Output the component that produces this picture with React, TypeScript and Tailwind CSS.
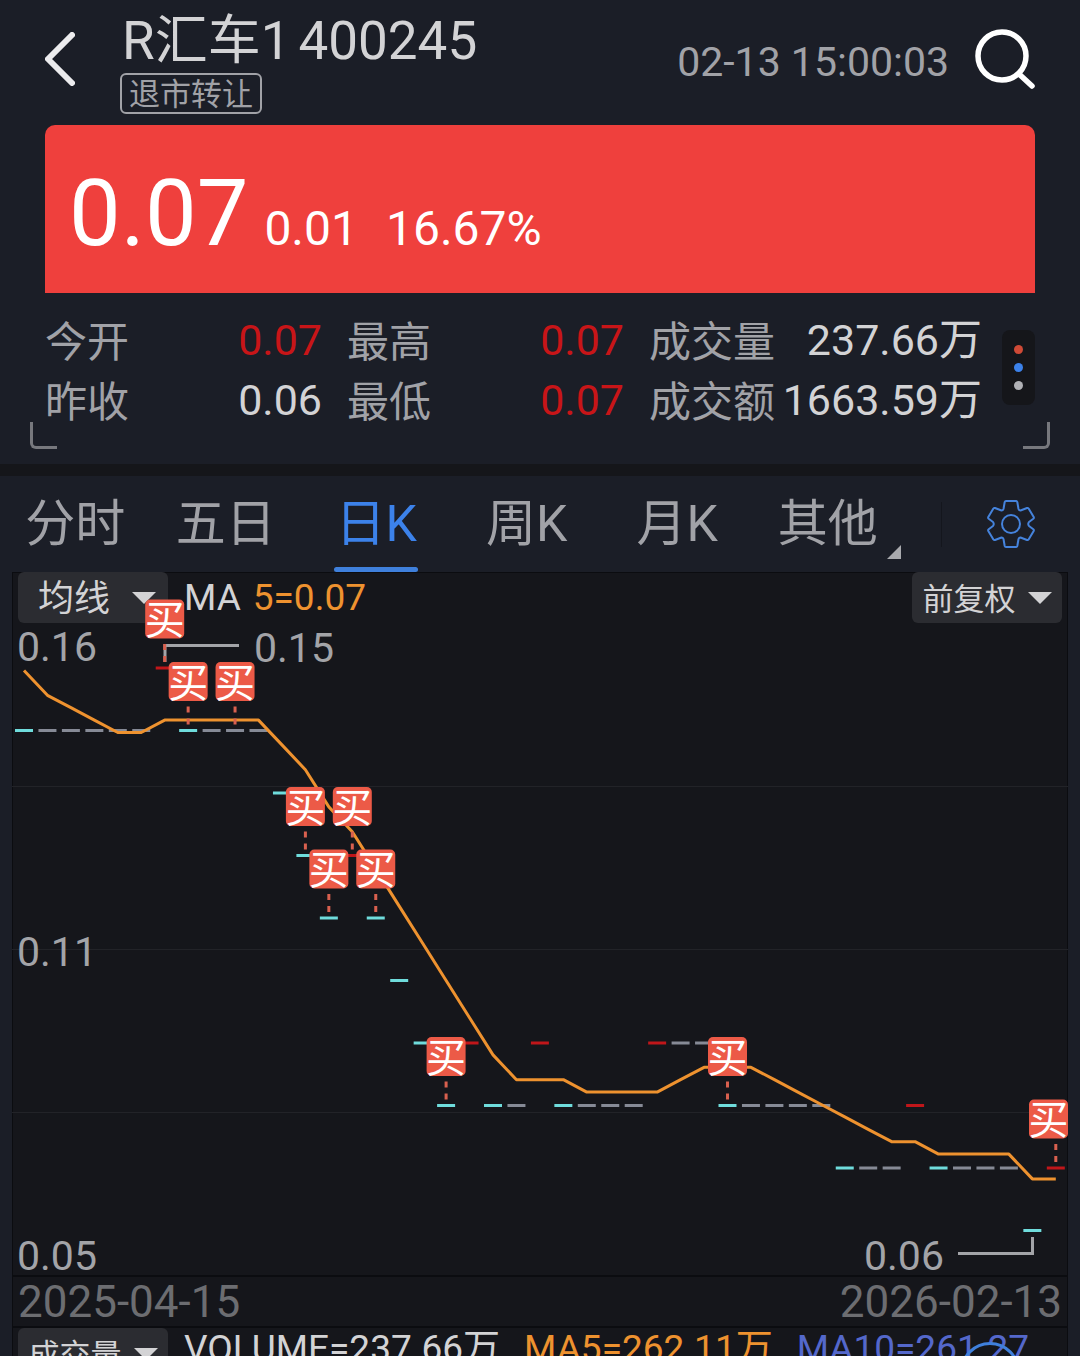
import { useState } from 'react'

const tabs = ['分时', '五日', '日K', '周K', '月K', '其他']

// The first four closes only feed the moving average.
const warmup = [0.16, 0.15, 0.15, 0.15]
const closes = [
  0.14, 0.14, 0.14, 0.14, 0.14, 0.14, 0.15, 0.14, 0.14, 0.14, 0.14, 0.13, 0.12, 0.11, 0.12,
  0.11, 0.1, 0.09, 0.08, 0.09, 0.08, 0.08, 0.09, 0.08, 0.08, 0.08, 0.08, 0.09, 0.09, 0.09,
  0.08, 0.08, 0.08, 0.08, 0.08, 0.07, 0.07, 0.07, 0.08, 0.07, 0.07, 0.07, 0.07, 0.06, 0.07,
]
const buys = [6, 7, 9, 12, 14, 13, 15, 18, 30, 44]

const CHART_W = 1056
const CHART_H = 703

const barX = (i: number) => 12 + i * 23.45
const priceY = (p: number) => 158.5 + (0.14 - p) * 6250
const averageY = (p: number) => 160.5 + (0.14 - p) * 6200

function barColor(i: number) {
  const prev = i === 0 ? warmup[3] : closes[i - 1]
  if (closes[i] > prev) return '#c0161a'
  if (closes[i] < prev) return '#6fdcdc'
  return '#868a96'
}

function averagePoints() {
  const all = [...warmup, ...closes]
  return closes
    .map((_, i) => {
      const sum = all.slice(i, i + 5).reduce((a, b) => a + b, 0)
      return `${barX(i)},${averageY(sum / 5)}`
    })
    .join(' ')
}

function BuyMark({ index }: { index: number }) {
  const x = barX(index)
  const y = priceY(closes[index])
  const left = Math.min(x - 19.5, CHART_W - 39)
  return (
    <g>
      <line x1={x} x2={x} y1={y - 24} y2={y - 6} stroke="#d9604f" strokeWidth="3" strokeDasharray="6 6" />
      <rect x={left} y={y - 68.5} width="39" height="39" rx="5" fill="#ec5a47" />
      <text x={left + 19.5} y={y - 34} textAnchor="middle" fontSize="40" fill="#fff">
        买
      </text>
    </g>
  )
}

function KLineChart() {
  return (
    <svg viewBox={`0 0 ${CHART_W} ${CHART_H}`} className="pointer-events-none relative block w-full overflow-visible">
      {[214.5, 377.5, 540.5].map((y) => (
        <line key={y} x1="0" x2={CHART_W} y1={y} y2={y} stroke="#222328" />
      ))}
      {closes.map((p, i) => (
        <line key={i} x1={barX(i) - 9} x2={barX(i) + 9} y1={priceY(p)} y2={priceY(p)} stroke={barColor(i)} strokeWidth="3" />
      ))}
      <polyline points={averagePoints()} fill="none" stroke="#ee922f" strokeWidth="3" strokeLinejoin="round" />
      <g fill="none" stroke="#a3a4a8" strokeWidth="3">
        <path d="M153 90V73.5H227" />
        <path d="M946 681.500H1020.500V665" />
      </g>
      <g fill="#a3a4a8" fontSize="41">
        <text x="5" y="89">0.16</text>
        <text x="5" y="394">0.11</text>
        <text x="5" y="698">0.05</text>
        <text x="242" y="90">0.15</text>
        <text x="852" y="698">0.06</text>
      </g>
      {buys.map((i) => (
        <BuyMark key={i} index={i} />
      ))}
    </svg>
  )
}

function Stat({ label, value, up }: { label: string; value: string; up?: boolean }) {
  return (
    <div className="flex h-[60px] items-center justify-between whitespace-nowrap">
      <dt className="pt-1 text-[42px] text-[#a1a2a7]">{label}</dt>
      <dd className={up ? 'text-[43px] text-[#c81518]' : 'text-[43px] text-[#d3d3d5]'}>{value}</dd>
    </div>
  )
}

function MenuButton({ label, wide }: { label: string; wide?: boolean }) {
  return (
    <button
      className={`flex h-[51px] w-[150px] shrink-0 items-center rounded-md bg-[#2b2c31] whitespace-nowrap text-[#d3d3d5] ${
        wide ? 'justify-between pr-3 pl-5 text-[36px]' : 'justify-center gap-3 text-[31px]'
      }`}
    >
      <span className="pt-1">{label}</span>
      <svg viewBox="0 0 24 12" className="h-3 w-6" fill="currentColor">
        <path d="M0 0H24L12 12Z" />
      </svg>
    </button>
  )
}

function GearIcon() {
  return (
    <svg viewBox="0 0 48 48" className="size-12" fill="none" stroke="#4583dc" strokeWidth="2" strokeLinejoin="round">
      <path d="M19 1H29Q30 1 30.300 2L31.500 9Q32 10.500 33.500 10.500L40 8Q41 7.700 41.600 8.500L46.700 17Q47.200 18 46.300 18.800L42 22Q40.500 24 42 26L46.300 29.200Q47.200 30 46.700 31L41.600 39.500Q41 40.300 40 40L33.500 37.500Q32 37.500 31.500 39L30.300 46Q30 47 29 47H19Q18 47 17.700 46L16.500 39Q16 37.500 14.500 37.500L8 40Q7 40.300 6.400 39.500L1.300 31Q.8 30 1.700 29.200L6 26Q7.500 24 6 22L1.700 18.800Q.8 18 1.300 17L6.400 8.500Q7 7.700 8 8L14.500 10.500Q16 10.500 16.500 9L17.700 2Q18 1 19 1Z" />
      <circle cx="24" cy="24" r="9" />
    </svg>
  )
}

export default function App() {
  const [active, setActive] = useState('日K')

  return (
    <div className="relative flex h-screen flex-col overflow-hidden bg-[#1b1e27] font-[Roboto,'Noto_Sans_CJK_SC',sans-serif]">
      <header className="flex shrink-0 items-start px-[45px] py-[11px]">
        <button aria-label="返回" className="flex h-24 w-[75px] items-center">
          <svg viewBox="0 0 30 54" className="h-[54px] w-[30px]" fill="none" stroke="#ececee" strokeWidth="6" strokeLinecap="round" strokeLinejoin="round">
            <path d="M27 3L3 27L27 51" />
          </svg>
        </button>
        <div className="flex flex-1 flex-col items-start whitespace-nowrap">
          <h1 className="flex gap-2 pl-0.5 text-[53px] leading-[60px] text-[#d3d3d5]">
            <span>R汇车1</span>
            <span>400245</span>
          </h1>
          <span className="mt-0.5 flex h-[41px] items-center rounded-md border-2 border-[#a1a2a7] px-[7px] pt-1 text-[31px] text-[#a1a2a7]">
            退市转让
          </span>
        </div>
        <time className="self-center text-[41px] whitespace-nowrap text-[#a1a2a7]">02-13 15:00:03</time>
        <button aria-label="搜索" className="ml-6 flex h-24 items-center">
          <svg viewBox="0 0 62 60" className="h-[60px] w-[62px]" fill="none" stroke="#fff" strokeWidth="5.500" strokeLinecap="round">
            <circle cx="29" cy="27" r="24" />
            <path d="M46 45L59 57" />
          </svg>
        </button>
      </header>

      <section className="mx-[45px] flex shrink-0 items-baseline rounded-t-[10px] bg-[#ef403d] pt-[42px] pb-8 pl-6 text-white">
        <span className="text-[92px] leading-[94px]">0.07</span>
        <span className="ml-4 text-[48px] leading-[48px]">0.01</span>
        <span className="ml-7 text-[48px] leading-[48px]">16.67%</span>
      </section>

      <section className="relative flex shrink-0 items-start px-[45px] pt-[17px] pb-[34px]">
        <dl className="grid flex-1 grid-cols-[277fr_277fr_333fr] gap-x-[25px]">
          <Stat label="今开" value="0.07" up />
          <Stat label="最高" value="0.07" up />
          <Stat label="成交量" value="237.66万" />
          <Stat label="昨收" value="0.06" />
          <Stat label="最低" value="0.07" up />
          <Stat label="成交额" value="1663.59万" />
        </dl>
        <button aria-label="更多" className="mt-5 ml-5 flex h-[75px] w-[33px] flex-col items-center justify-center gap-[9px] rounded-lg bg-[#15161a]">
          <span className="size-[9px] rounded-full bg-[#cf4a36]" />
          <span className="size-[9px] rounded-full bg-[#3c82ea]" />
          <span className="size-[9px] rounded-full bg-[#b0b1b5]" />
        </button>
        <span className="absolute bottom-[15px] left-[30px] size-[27px] rounded-bl-md border-b-3 border-l-3 border-[#77787d]" />
        <span className="absolute right-[30px] bottom-[15px] size-[27px] rounded-br-md border-r-3 border-b-3 border-[#77787d]" />
      </section>

      <div className="h-3 shrink-0 bg-[#15161a]" />

      <nav className="flex h-24 shrink-0">
        {tabs.map((tab) => (
          <button
            key={tab}
            onClick={() => setActive(tab)}
            className={`relative flex-1 text-[50px] leading-[96px] whitespace-nowrap ${
              active === tab ? 'text-[#3c82ea]' : 'text-[#a1a2a7]'
            }`}
          >
            {tab}
            {active === tab && (
              <span className="absolute bottom-0 left-1/2 h-[5px] w-[84px] -translate-x-1/2 rounded-sm bg-[#3f80dc]" />
            )}
            {tab === '其他' && (
              <svg viewBox="0 0 14 14" className="absolute right-0.5 bottom-[13px] size-3.5" fill="#a9aaae">
                <path d="M14 0V14H0Z" />
              </svg>
            )}
          </button>
        ))}
        <div className="flex w-[177px] items-center justify-between pr-[45px] pl-[38px]">
          <span className="h-[45px] w-px bg-[#14161d]" />
          <button aria-label="设置">
            <GearIcon />
          </button>
        </div>
      </nav>

      <main className="mx-3 shrink-0 bg-[#15161b] ring-1 ring-[#0b0c10] ring-inset">
        <section className="relative border-b-2 border-[#0b0c10]">
          <div className="absolute inset-x-0 top-0 flex items-center px-1.5 text-[37px] leading-[51px]">
            <MenuButton label="均线" wide />
            <span className="ml-4 text-[#d3d3d5]">MA</span>
            <span className="ml-3 flex-1 text-[#ee922f]">5=0.07</span>
            <MenuButton label="前复权" />
          </div>
          <KLineChart />
        </section>

        <div className="flex h-[51px] items-center justify-between border-b-2 border-[#0b0c10] px-1.5 text-[44px] text-[#6c6d71]">
          <time>2025-04-15</time>
          <time>2026-02-13</time>
        </div>

        <section className="flex items-start px-1.5 text-[37px] leading-[42px] whitespace-nowrap">
          <MenuButton label="成交量" />
          <span className="ml-4 text-[#d3d3d5]">VOLUME=237.66万</span>
          <span className="ml-6 text-[#ee922f]">MA5=262.11万</span>
          <span className="ml-6 text-[#5468cb]">MA10=261.27</span>
        </section>
      </main>

      <button aria-label="展开" className="absolute right-[60px] -bottom-[46px] size-[60px] rounded-full border-3 border-[#3f80dc]" />
    </div>
  )
}
